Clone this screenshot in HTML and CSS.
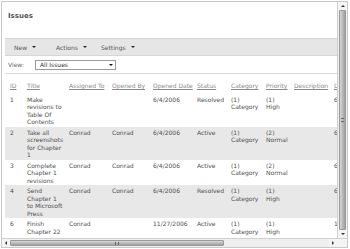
FILE: index.html
```html
<!DOCTYPE html>
<html lang="en">
<head>
  <meta charset="UTF-8">
  <title>Issues</title>
  <link rel="stylesheet" href="styles.css">
</head>
<body>
  <div class="window">
    <div class="viewport">
      <div class="page">
        <h1 class="page-title">Issues</h1>

        <div class="toolbar">
          <span class="menu menu-new">New <i class="caret"></i></span>
          <span class="menu menu-actions">Actions <i class="caret"></i></span>
          <span class="menu">Settings <i class="caret"></i></span>
        </div>

        <div class="viewbar">
          <span class="view-label">View:</span>
          <div class="select">All Issues <i class="caret"></i></div>
        </div>

        <table class="list">
          <thead>
            <tr>
              <th class="c-id"><a>ID</a></th>
              <th class="c-title"><a>Title</a></th>
              <th class="c-assigned"><a>Assigned To</a></th>
              <th class="c-opened"><a>Opened By</a></th>
              <th class="c-date"><a>Opened Date</a></th>
              <th class="c-status"><a>Status</a></th>
              <th class="c-cat"><a>Category</a></th>
              <th class="c-prio"><a>Priority</a></th>
              <th class="c-desc"><a>Description</a></th>
              <th class="c-due"><a>Due Date</a></th>
            </tr>
          </thead>
          <tbody>
            <tr>
              <td>1</td><td>Make revisions to Table Of Contents</td><td></td><td></td>
              <td>6/4/2006</td><td>Resolved</td><td>(1)<br>Category</td><td>(1)<br>High</td><td></td><td>6/24/2006</td>
            </tr>
            <tr class="alt">
              <td>2</td><td>Take all screenshots for Chapter 1</td><td>Conrad</td><td>Conrad</td>
              <td>6/4/2006</td><td>Active</td><td>(1)<br>Category</td><td>(2)<br>Normal</td><td></td><td>6/10/2006</td>
            </tr>
            <tr>
              <td>3</td><td>Complete Chapter 1 revisions</td><td>Conrad</td><td>Conrad</td>
              <td>6/4/2006</td><td>Active</td><td>(1)<br>Category</td><td>(2)<br>Normal</td><td></td><td>6/12/2006</td>
            </tr>
            <tr class="alt">
              <td>4</td><td>Send Chapter 1 to Microsoft Press</td><td>Conrad</td><td>Conrad</td>
              <td>6/4/2006</td><td>Resolved</td><td>(1)<br>Category</td><td>(1)<br>High</td><td></td><td>6/15/2006</td>
            </tr>
            <tr>
              <td>6</td><td>Finish Chapter 22</td><td>Conrad</td><td></td>
              <td>11/27/2006</td><td>Active</td><td>(1)<br>Category</td><td>(1)<br>High</td><td></td><td>11/30/2006</td>
            </tr>
          </tbody>
        </table>
      </div>

      <div class="vscroll">
        <div class="sb-btn"><i class="tri tri-up"></i></div>
        <div class="vthumb"><span class="grip-h"></span></div>
        <div class="sb-btn"><i class="tri tri-down"></i></div>
      </div>
    </div>

    <div class="hscroll">
      <div class="sb-btn"><i class="tri tri-left"></i></div>
      <div class="hthumb"><span class="grip-v"></span></div>
      <div class="htrack"></div>
      <div class="sb-btn"><i class="tri tri-right"></i></div>
      <div class="corner"></div>
    </div>
  </div>
</body>
</html>
```

FILE: styles.css
```css
* { box-sizing: border-box; margin: 0; padding: 0; }
body { background: #fff; font-family: "DejaVu Sans", Verdana, sans-serif; font-size: 6px; color: #4f4f4f; }

.window { margin: 1px; width: 347px; height: 247px; border: 1px solid #c9c9c9; display: flex; flex-direction: column; }
.viewport { flex: 1; display: flex; min-height: 0; }
.page { flex: 1; overflow: hidden; padding: 0 0 0 3px; }

.page-title { font-size: 7px; font-weight: bold; color: #555; margin: 10px 0 0 3px; line-height: 9px; height: 26px; }

.toolbar { display: flex; align-items: center; height: 18px; background: #e6e6e6; border-top: 1px solid #d6d6d6; border-bottom: 1px solid #d6d6d6; padding-left: 9px; color: #555; }
.menu { display: inline-flex; align-items: center; }
.menu-new { width: 42px; }
.menu-actions { width: 45px; }
.caret { display: inline-block; width: 0; height: 0; border-left: 2px solid transparent; border-right: 2px solid transparent; border-top: 2px solid #222; margin-left: 5px; }

.viewbar { display: flex; align-items: center; height: 18px; border-bottom: 1px solid #d8d8d8; padding-left: 3px; }
.view-label { width: 27px; color: #666; }
.select { display: flex; align-items: center; justify-content: space-between; width: 81px; height: 10px; border: 1px solid #9a9a9a; padding: 0 2px 0 4px; color: #333; }
.select .caret { border-top-color: #111; }

.list { width: 377px; border-collapse: collapse; table-layout: fixed; margin-top: 6px; }
.list th, .list td { text-align: left; vertical-align: top; padding: 2px 2px 1px; line-height: 7.5px; font-weight: normal; }
.list th { padding-bottom: 4px; }
.list th a { color: #8a8a8a; text-decoration: underline; white-space: nowrap; }
.list tr.alt td { background: #e8e8e8; }
.list td:first-child, .list th:first-child { padding-left: 5px; }
.list td:nth-child(2) { padding-right: 3px; }

.c-id { width: 20px; }
.c-title { width: 42px; }
.c-assigned { width: 43px; }
.c-opened { width: 41px; }
.c-date { width: 44px; }
.c-status { width: 34px; }
.c-cat { width: 35px; }
.c-prio { width: 28px; }
.c-desc { width: 40px; }
.c-due { width: 50px; }

/* scrollbars */
.vscroll { width: 10px; display: flex; flex-direction: column; background: #efefef; border-left: 1px solid #d0d0d0; }
.hscroll { height: 9px; display: flex; background: #efefef; border-top: 1px solid #d0d0d0; }
.sb-btn { width: 8px; height: 8px; display: flex; align-items: center; justify-content: center; background: #f4f4f4; flex: none; }
.vscroll .sb-btn { width: 100%; }
.vthumb { flex: 1; margin: 0 1px; background: linear-gradient(to right, #d8d8d8, #b5b5b5 60%, #a0a0a0); border: 1px solid #9a9a9a; border-radius: 1px; display: flex; align-items: center; justify-content: center; }
.hthumb { width: 214px; margin: 1px 0; background: linear-gradient(#d8d8d8, #b5b5b5 60%, #a0a0a0); border: 1px solid #9a9a9a; border-radius: 1px; display: flex; align-items: center; justify-content: center; }
.htrack { flex: 1; }
.corner { width: 10px; background: #f4f4f4; }
.grip-h { width: 3px; height: 4px; border-top: 1px solid #666; border-bottom: 1px solid #666; }
.grip-v { width: 4px; height: 3px; border-left: 1px solid #666; border-right: 1px solid #666; }

.tri { display: block; width: 0; height: 0; }
.tri-up { border-left: 2px solid transparent; border-right: 2px solid transparent; border-bottom: 2px solid #333; }
.tri-down { border-left: 2px solid transparent; border-right: 2px solid transparent; border-top: 2px solid #333; }
.tri-left { border-top: 2px solid transparent; border-bottom: 2px solid transparent; border-right: 2px solid #333; }
.tri-right { border-top: 2px solid transparent; border-bottom: 2px solid transparent; border-left: 2px solid #333; }
```
